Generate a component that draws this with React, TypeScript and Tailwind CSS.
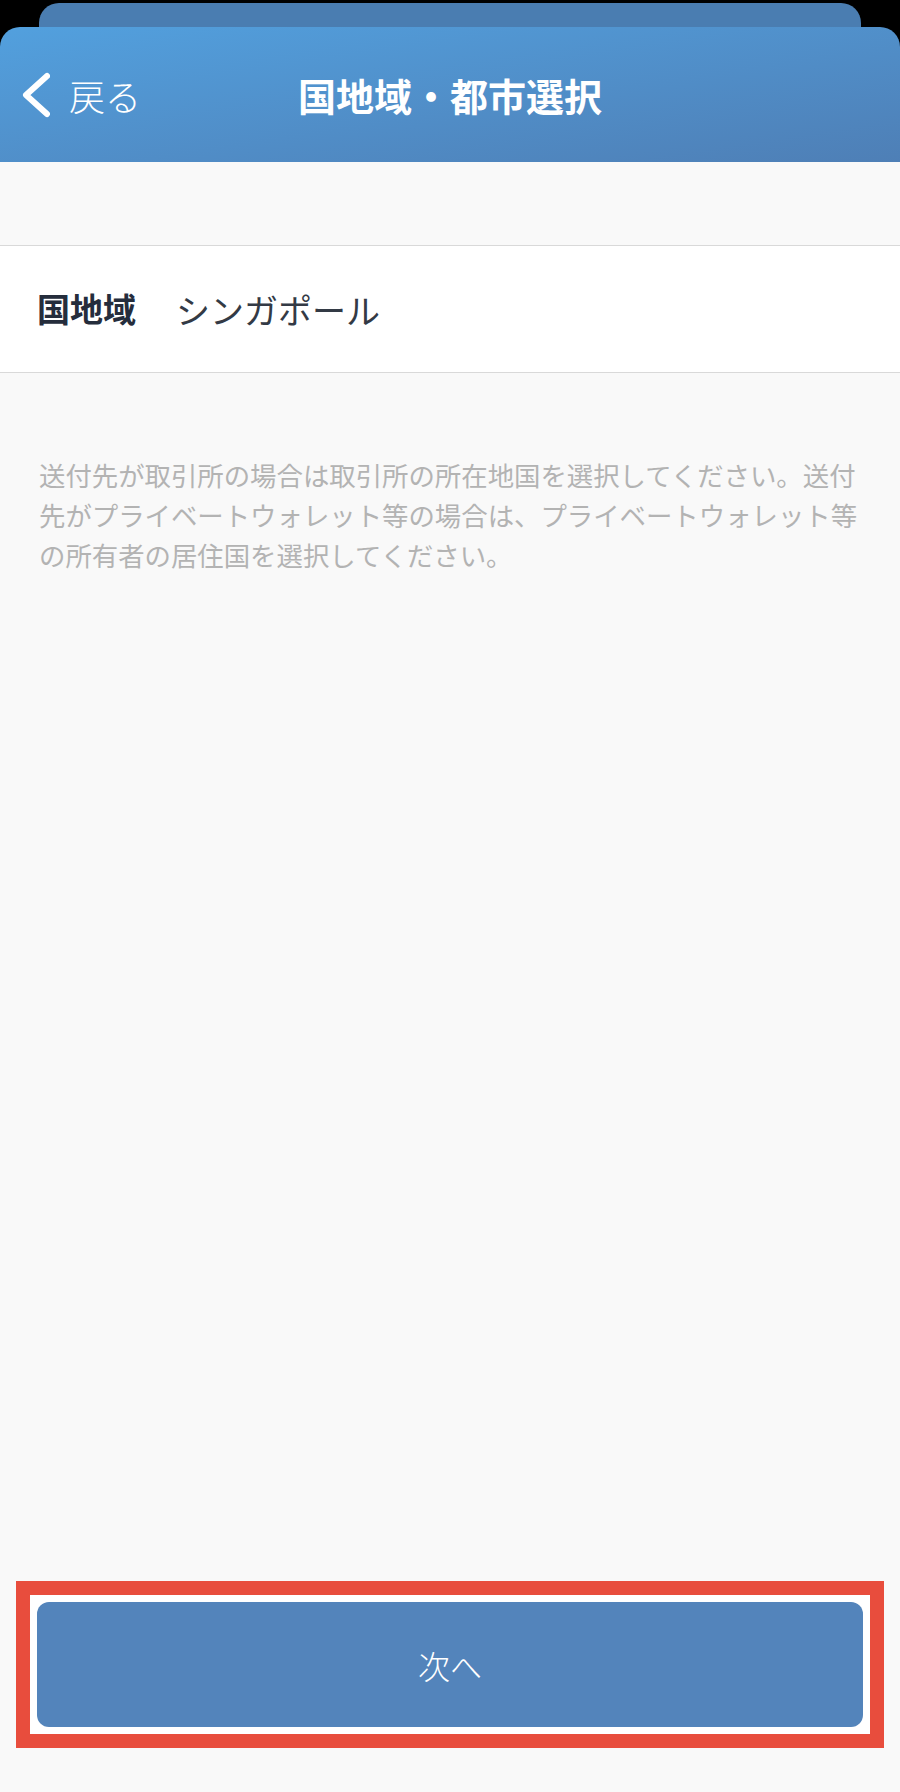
const jp = { fontFamily: '"Noto Sans CJK JP", "Noto Sans", sans-serif' };

export default function App() {
  return (
    <div className="flex h-[1792px] flex-col bg-black" style={jp}>
      {/* stacked sheet behind */}
      <div className="mx-[39px] mt-[3px] h-[24px] rounded-t-[20px] bg-[#4a7db1]" />

      {/* header */}
      <header className="grid h-[135px] grid-cols-[1fr_auto_1fr] items-center rounded-t-[20px] bg-gradient-to-br from-[#52a0de] to-[#4e7fb6] text-white">
        <div className="flex items-center gap-[19px] pl-[20px]">
          <svg width="30" height="48" viewBox="0 0 30 48" fill="none">
            <polyline
              points="27,5 6,24 27,43"
              stroke="white"
              strokeWidth="6"
              strokeLinecap="round"
              strokeLinejoin="round"
            />
          </svg>
          <span className="text-[36px] font-light leading-none">戻る</span>
        </div>
        <h1 className="text-[38px] font-bold leading-none">国地域・都市選択</h1>
        <div />
      </header>

      <main className="flex flex-1 flex-col bg-[#f9f9f9]">
        <div className="h-[84px] border-b border-[#d9d9d9]" />

        <div className="flex h-[127px] items-center gap-[40px] border-b border-[#d9d9d9] bg-white px-[37px]">
          <span className="text-[33px] font-bold text-[#252d3c]">国地域</span>
          <span className="text-[34px] text-[#333a45]">シンガポール</span>
        </div>

        <p className="px-[39px] pt-[82px] text-[26.4px] leading-[40px] text-[#b3b3b3]">
          送付先が取引所の場合は取引所の所在地国を選択してください。送付先がプライベートウォレット等の場合は、プライベートウォレット等の所有者の居住国を選択してください。
        </p>

        <div className="mt-auto px-[16px] pb-[44px]">
          <div className="border-[14px] border-[#e84d3d] bg-white p-[7px]">
            <button className="flex h-[125px] w-full items-center justify-center rounded-[12px] bg-[#5384bb] text-[32px] font-light text-white">
              次へ
            </button>
          </div>
        </div>
      </main>
    </div>
  );
}
